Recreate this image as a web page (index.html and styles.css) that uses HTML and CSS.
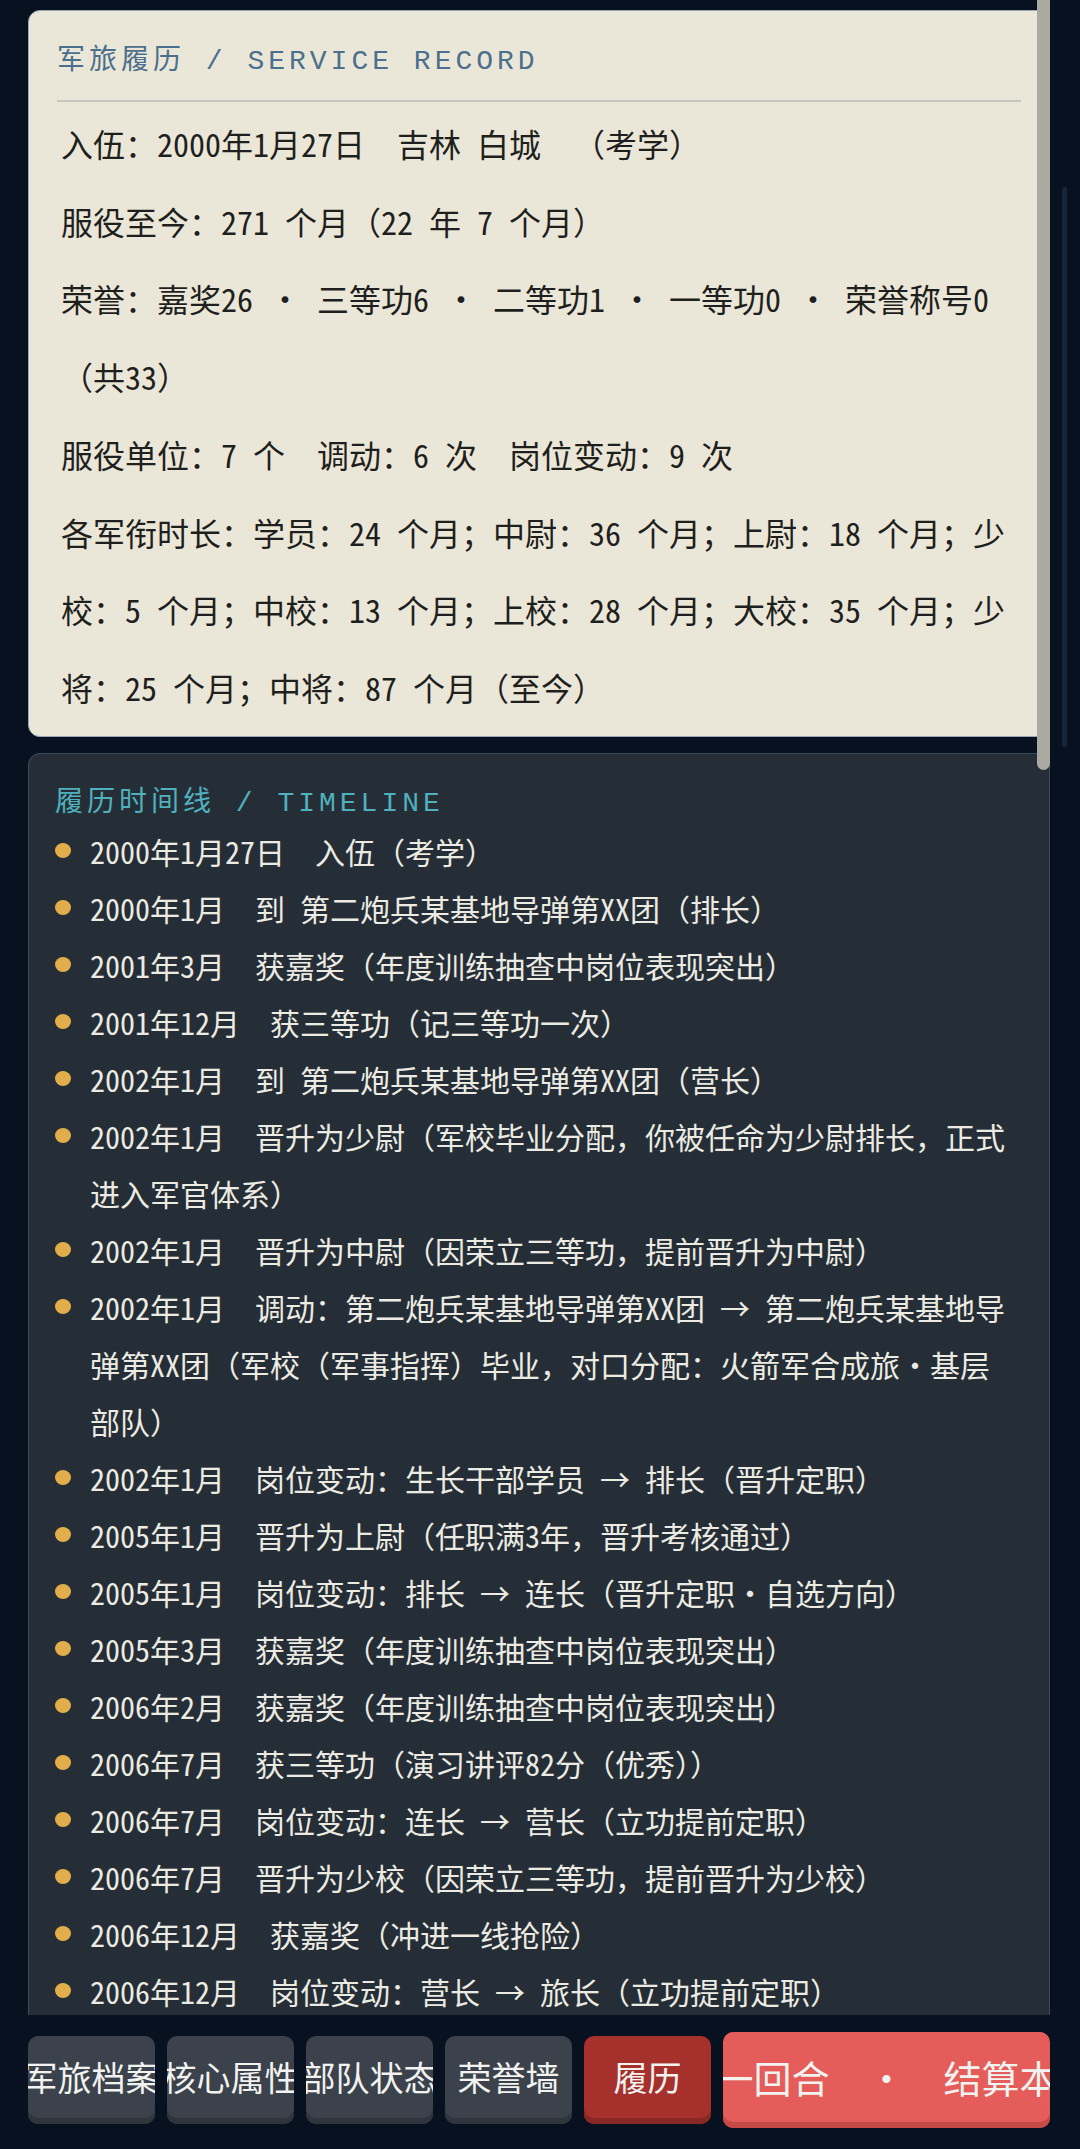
FILE: index.html
```html
<!DOCTYPE html>
<html lang="zh-CN">
<head>
<meta charset="utf-8">
<title>军旅履历</title>
<link rel="stylesheet" href="styles.css">
</head>
<body>
<div class="app">
  <main class="scroll">
    <section class="card record">
      <h2 class="card-title">军旅履历 / SERVICE RECORD</h2>
      <div class="record-body">
        <p class="row">入伍：2000年1月27日  吉林 白城  （考学）</p>
        <p class="row">服役至今：271 个月（22 年 7 个月）</p>
        <p class="row">荣誉：嘉奖26 ・ 三等功6 ・ 二等功1 ・ 一等功0 ・ 荣誉称号0（共33）</p>
        <p class="row">服役单位：7 个  调动：6 次  岗位变动：9 次</p>
        <p class="row">各军衔时长：学员：24 个月；中尉：36 个月；上尉：18 个月；少校：5 个月；中校：13 个月；上校：28 个月；大校：35 个月；少将：25 个月；中将：87 个月（至今）</p>
      </div>
    </section>
    <section class="card timeline">
      <h2 class="card-title">履历时间线 / TIMELINE</h2>
      <ul class="events">
        <li class="event"><span class="dot"></span><span class="event-text">2000年1月27日  入伍（考学）</span></li>
        <li class="event"><span class="dot"></span><span class="event-text">2000年1月  到 第二炮兵某基地导弹第XX团（排长）</span></li>
        <li class="event"><span class="dot"></span><span class="event-text">2001年3月  获嘉奖（年度训练抽查中岗位表现突出）</span></li>
        <li class="event"><span class="dot"></span><span class="event-text">2001年12月  获三等功（记三等功一次）</span></li>
        <li class="event"><span class="dot"></span><span class="event-text">2002年1月  到 第二炮兵某基地导弹第XX团（营长）</span></li>
        <li class="event"><span class="dot"></span><span class="event-text">2002年1月  晋升为少尉（军校毕业分配，你被任命为少尉排长，正式进入军官体系）</span></li>
        <li class="event"><span class="dot"></span><span class="event-text">2002年1月  晋升为中尉（因荣立三等功，提前晋升为中尉）</span></li>
        <li class="event"><span class="dot"></span><span class="event-text">2002年1月  调动：第二炮兵某基地导弹第XX团 → 第二炮兵某基地导弹第XX团（军校（军事指挥）毕业，对口分配：火箭军合成旅・基层部队）</span></li>
        <li class="event"><span class="dot"></span><span class="event-text">2002年1月  岗位变动：生长干部学员 → 排长（晋升定职）</span></li>
        <li class="event"><span class="dot"></span><span class="event-text">2005年1月  晋升为上尉（任职满3年，晋升考核通过）</span></li>
        <li class="event"><span class="dot"></span><span class="event-text">2005年1月  岗位变动：排长 → 连长（晋升定职・自选方向）</span></li>
        <li class="event"><span class="dot"></span><span class="event-text">2005年3月  获嘉奖（年度训练抽查中岗位表现突出）</span></li>
        <li class="event"><span class="dot"></span><span class="event-text">2006年2月  获嘉奖（年度训练抽查中岗位表现突出）</span></li>
        <li class="event"><span class="dot"></span><span class="event-text">2006年7月  获三等功（演习讲评82分（优秀））</span></li>
        <li class="event"><span class="dot"></span><span class="event-text">2006年7月  岗位变动：连长 → 营长（立功提前定职）</span></li>
        <li class="event"><span class="dot"></span><span class="event-text">2006年7月  晋升为少校（因荣立三等功，提前晋升为少校）</span></li>
        <li class="event"><span class="dot"></span><span class="event-text">2006年12月  获嘉奖（冲进一线抢险）</span></li>
        <li class="event"><span class="dot"></span><span class="event-text">2006年12月  岗位变动：营长 → 旅长（立功提前定职）</span></li>
        <li class="event"><span class="dot"></span><span class="event-text">2007年3月  获嘉奖（年度训练抽查中岗位表现突出）</span></li>
      </ul>
    </section>
  </main>
  <nav class="tabs">
    <button class="tab">军旅档案</button>
    <button class="tab">核心属性</button>
    <button class="tab">部队状态</button>
    <button class="tab">荣誉墙</button>
    <button class="tab active">履历</button>
    <button class="tab primary">下一回合  ・  结算本月</button>
  </nav>
  <div class="page-thumb"></div>
  <div class="page-track"></div>
</div>
</body>
</html>
```

FILE: styles.css
```css
html, body {
  margin: 0;
  padding: 0;
  background: #08111f;
}

body {
  width: 1080px;
  height: 2149px;
  overflow: hidden;
  font-family: "Noto Sans Mono CJK SC", "Noto Sans CJK SC", monospace;
}

.app {
  position: relative;
  height: 2149px;
  display: flex;
  flex-direction: column;
}

.scroll {
  height: 2015px;
  flex: none;
  overflow: hidden;
  box-sizing: border-box;
  padding: 10px 30px 0 28px;
  display: flex;
  flex-direction: column;
  gap: 16px;
}

.card {
  flex: none;
  border-radius: 12px;
}

.card-title {
  margin: 0;
  font-family: "Liberation Mono", "Noto Sans CJK SC", monospace;
  font-weight: 400;
  font-size: 28px;
  line-height: 40px;
  letter-spacing: 4px;
  white-space: pre;
}

/* service record card */
.record {
  background: #ebe7d8;
  border: 1px solid #98aab8;
  padding: 31px 28px 9.5px 28px;
}

.record .card-title {
  color: #4b6f8c;
  padding-bottom: 18px;
  border-bottom: 2px solid #c4c6c0;
}

.record-body {
  margin-top: 3px;
  padding-left: 4px;
  font-size: 32px;
  line-height: 77.7px;
  color: #1f1f1d;
}

.row {
  margin: 0;
  white-space: pre-wrap;
}

/* timeline card */
.timeline {
  background: #252e36;
  border: 1px solid #3a4b59;
  border-bottom: none;
  border-radius: 12px 12px 0 0;
  padding: 31px 28px 0 26px;
}

.timeline .card-title {
  color: #4fb1bd;
  line-height: 38px;
}

.events {
  list-style: none;
  margin: 0;
  padding: 0 12px 0 0;
}

.event {
  display: flex;
  gap: 19px;
  font-size: 30px;
  line-height: 57px;
  color: #ecebe3;
}

.dot {
  flex: none;
  width: 16px;
  height: 15px;
  margin-top: 19.5px;
  border-radius: 50%;
  background: #e2ae4c;
}

.event-text {
  flex: 1;
  min-width: 0;
  white-space: pre-wrap;
}

/* bottom tab bar */
.tabs {
  flex: 1;
  display: grid;
  grid-template-columns: repeat(5, 127px) 1fr;
  gap: 12px;
  align-items: center;
  align-content: start;
  padding: 17px 30px 0 28px;
}

.tab {
  height: 88px;
  margin: 0;
  border: none;
  border-radius: 10px;
  padding: 0 0 6px 0;
  box-sizing: border-box;
  background: #3b424c;
  box-shadow: inset 0 -6px 0 #2f353d;
  color: #f2f2f0;
  font-family: "Noto Sans Mono CJK SC", "Noto Sans CJK SC", monospace;
  font-size: 34px;
  line-height: 1;
  display: flex;
  align-items: center;
  justify-content: center;
  overflow: hidden;
  white-space: nowrap;
}

.tab.active {
  background: #a6302b;
  box-shadow: inset 0 -6px 0 #882723;
}

.tab.primary {
  height: 96px;
  background: #e45d5a;
  box-shadow: inset 0 -6px 0 #c64b48;
  font-size: 38px;
  white-space: pre;
}

/* overlay scrollbars */
.page-thumb {
  position: absolute;
  left: 1037px;
  top: -10px;
  width: 13px;
  height: 780px;
  border-radius: 7px;
  background: #aaa9a2;
}

.page-track {
  position: absolute;
  left: 1062px;
  top: 187px;
  width: 5px;
  height: 560px;
  border-radius: 3px;
  background: #15263a;
}
```
